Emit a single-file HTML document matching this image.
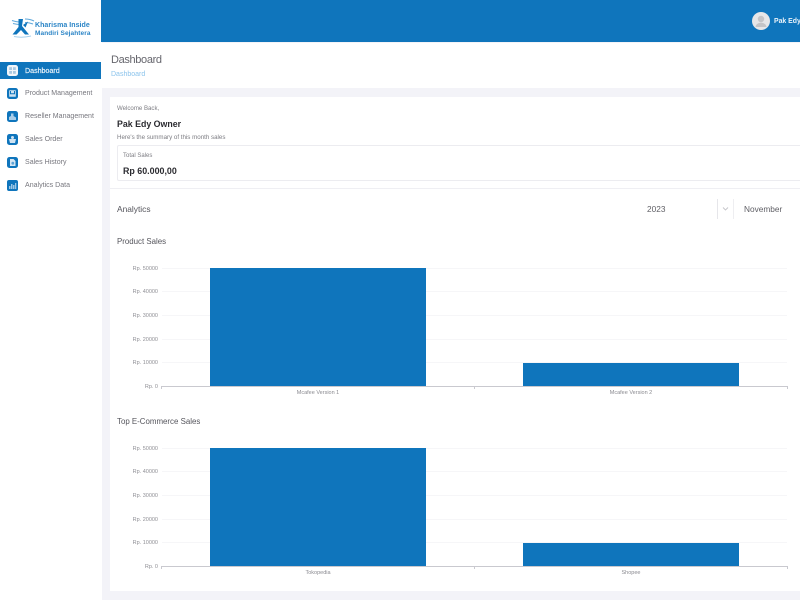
<!DOCTYPE html>
<html>
<head>
<meta charset="utf-8">
<style>
html,body{margin:0;padding:0;width:800px;height:600px;overflow:hidden;background:#fff;font-family:"Liberation Sans",sans-serif}
.a{position:absolute;white-space:nowrap}
.nav{position:absolute;left:25px;font-size:7.050px;color:#77777e;line-height:10px;letter-spacing:0}
.ic{position:absolute;left:7px;width:11px;height:11px}
.yl{position:absolute;left:113px;width:45px;text-align:right;font-size:5.500px;line-height:7px;color:#8f8f95}
.g{position:absolute;left:162px;width:625px;height:1px;background:#f6f6f8}
.xl{position:absolute;font-size:5.500px;line-height:7px;color:#8a8a90;text-align:center;width:120px}
.bar{position:absolute;background:#0f75bc}
.ax{position:absolute;background:#c9c9cf}
</style>
</head>
<body>
<div style="position:relative;width:800px;height:600px;overflow:hidden;filter:blur(.3px)">

<!-- content bg -->
<div class="a" style="left:102px;top:42px;width:698px;height:558px;background:#f3f3f8"></div>
<div class="a" style="left:102px;top:43px;width:698px;height:45px;background:#fff"></div>

<!-- top bar -->
<div class="a" style="left:101px;top:0;width:699px;height:42px;background:#0f75bc"></div>
<div class="a" style="left:752px;top:12px;width:18px;height:18px;border-radius:50%;background:#e6e6e8;overflow:hidden">
  <svg width="18" height="18" viewBox="0 0 18 18"><circle cx="9" cy="7" r="3.2" fill="#c4c4c7"/><path d="M3.5 15c.5-3 3-4.2 5.500-4.200s5 1.200 5.500 4.200z" fill="#c4c4c7"/></svg>
</div>
<div class="a" style="left:774px;top:16.500px;font-size:6.900px;line-height:10px;color:#e8f2fa;font-weight:bold">Pak Edy</div>

<!-- sidebar -->
<div class="a" style="left:0;top:0;width:101px;height:600px;background:#fff"></div>
<svg class="a" style="left:11px;top:17px" width="24" height="21" viewBox="0 0 24 21">
  <path d="M1 3.500c3 1 5 1.500 8 1.500M2 6.500c2 .5 4 1 7 1M14 2c3 0 6 .5 9 2M14 5.500c3 0 5 .3 8 1.500" stroke="#5fa8da" stroke-width="1.100" fill="none"/>
  <path d="M7.500 2h4.500L11 9l7 8.500h-4L10 13l-4.500 4.500H1.500L7.500 10z" fill="#0f75bc"/>
  <path d="M12 8l5-3.500-2.500 6z" fill="#0f75bc"/>
  <path d="M3 19.500c5 1 11 1 17-.5" stroke="#a6d0ec" stroke-width="1" fill="none"/>
</svg>
<div class="a" style="left:35px;top:21px;font-size:7px;line-height:9px;font-weight:bold;color:#2a84c6;letter-spacing:.05px">Kharisma Inside</div>
<div class="a" style="left:35px;top:29px;font-size:6.500px;line-height:9px;font-weight:bold;color:#2a84c6;letter-spacing:.08px">Mandiri Sejahtera</div>

<div class="a" style="left:0;top:62px;width:101px;height:17px;background:#0f75bc"></div>
<svg class="ic" style="top:65px" viewBox="0 0 11 11"><rect width="11" height="11" rx="2.500" fill="#f2f6fa"/><g fill="#a9c9e2"><rect x="2.200" y="2.200" width="2.800" height="2.800"/><rect x="6" y="2.200" width="2.800" height="2.800"/><rect x="2.200" y="6" width="2.800" height="2.800"/><rect x="6" y="6" width="2.800" height="2.800"/></g></svg>
<div class="nav" style="top:66px;color:#eef5fb;font-size:7.100px;-webkit-text-stroke:.15px #eef5fb">Dashboard</div>

<svg class="ic" style="top:88px" viewBox="0 0 11 11"><rect width="11" height="11" rx="2.500" fill="#0f75bc"/><rect x="2.200" y="2.200" width="6.600" height="6.600" rx=".6" fill="#cfe3f2"/><path d="M3.500 3v2.800h4V3" stroke="#0f75bc" stroke-width="1" fill="none"/></svg>
<div class="nav" style="top:88.500px">Product Management</div>

<svg class="ic" style="top:111px" viewBox="0 0 11 11"><rect width="11" height="11" rx="2.500" fill="#0f75bc"/><path d="M2 9V6l2-1V2.500h2.500V5L9 6.500V9z" fill="#a9cde8"/></svg>
<div class="nav" style="top:111.500px">Reseller Management</div>

<svg class="ic" style="top:134px" viewBox="0 0 11 11"><rect width="11" height="11" rx="2.500" fill="#0f75bc"/><path d="M2 5h7L8 9H3z" fill="#cfe3f2"/><circle cx="5.500" cy="3.500" r="1.500" fill="#cfe3f2"/></svg>
<div class="nav" style="top:134.500px">Sales Order</div>

<svg class="ic" style="top:157px" viewBox="0 0 11 11"><rect width="11" height="11" rx="2.500" fill="#0f75bc"/><path d="M3 2h3.500L8.500 4v5H3z" fill="#d5e6f3"/><circle cx="5.800" cy="6.200" r="1.400" fill="#5ea3d4"/></svg>
<div class="nav" style="top:157.500px">Sales History</div>

<svg class="ic" style="top:180px" viewBox="0 0 11 11"><rect width="11" height="11" rx="2" fill="#0f75bc"/><g fill="#9cc6e5"><rect x="2" y="6" width="1.500" height="3"/><rect x="4" y="4" width="1.500" height="5"/><rect x="6" y="5" width="1.500" height="4"/><rect x="8" y="3" width="1.300" height="6"/></g></svg>
<div class="nav" style="top:180.500px">Analytics Data</div>

<!-- page header -->
<div class="a" style="left:111px;top:52.500px;font-size:11px;line-height:14px;color:#66666d;letter-spacing:-.35px">Dashboard</div>
<div class="a" style="left:111px;top:70px;font-size:7px;line-height:10px;color:#8cc4ec">Dashboard</div>

<!-- card -->
<div class="a" style="left:110px;top:97px;width:690px;height:494px;background:#fff"></div>
<div class="a" style="left:117px;top:105px;font-size:6.100px;line-height:8px;color:#7d7d83">Welcome Back,</div>
<div class="a" style="left:117px;top:118px;font-size:8.800px;line-height:12px;font-weight:bold;color:#2b2b30">Pak Edy Owner</div>
<div class="a" style="left:117px;top:133.500px;font-size:6.200px;line-height:8px;color:#7d7d83">Here's the summary of this month sales</div>

<div class="a" style="left:117px;top:145px;width:690px;height:36px;border:1px solid #ececf0;border-radius:2px;box-sizing:border-box"></div>
<div class="a" style="left:123px;top:151.500px;font-size:6px;line-height:8px;color:#7d7d83">Total Sales</div>
<div class="a" style="left:123px;top:165px;font-size:8.900px;line-height:12px;font-weight:bold;color:#2b2b30">Rp 60.000,00</div>

<div class="a" style="left:110px;top:188px;width:690px;height:1px;background:#efeff3"></div>

<div class="a" style="left:117px;top:204px;font-size:8.400px;line-height:11px;color:#55555c">Analytics</div>
<div class="a" style="left:647px;top:204px;font-size:8.300px;line-height:11px;color:#5f5f65">2023</div>
<div class="a" style="left:717px;top:199px;width:1px;height:20px;background:#e6e6ea"></div>
<div class="a" style="left:733px;top:199px;width:1px;height:20px;background:#eeeef1"></div>
<svg class="a" style="left:722px;top:206px" width="7" height="6" viewBox="0 0 7 6"><path d="M1 1.500l2.500 2.500L6 1.500" stroke="#c4c4c9" stroke-width=".9" fill="none"/></svg>
<div class="a" style="left:744px;top:204px;font-size:8.300px;line-height:11px;color:#5f5f65">November</div>

<!-- chart 1 -->
<div class="a" style="left:117px;top:236px;font-size:7.900px;line-height:11px;color:#55555c">Product Sales</div>
<div class="g" style="top:268px"></div><div class="g" style="top:291px"></div><div class="g" style="top:315px"></div><div class="g" style="top:339px"></div><div class="g" style="top:362px"></div>
<div class="yl" style="top:265.500px">Rp. 50000</div><div class="yl" style="top:289px">Rp. 40000</div><div class="yl" style="top:312.500px">Rp. 30000</div><div class="yl" style="top:336.500px">Rp. 20000</div><div class="yl" style="top:360px">Rp. 10000</div><div class="yl" style="top:383.500px">Rp. 0</div>
<div class="bar" style="left:210px;top:268px;width:216px;height:118px"></div>
<div class="bar" style="left:523px;top:363px;width:216px;height:23px"></div>
<div class="ax" style="left:161px;top:386px;width:627px;height:1px"></div>
<div class="ax" style="left:161px;top:386px;width:1px;height:3px"></div>
<div class="ax" style="left:474px;top:386px;width:1px;height:3px"></div>
<div class="ax" style="left:787px;top:386px;width:1px;height:3px"></div>
<div class="xl" style="left:258px;top:389.500px">Mcafee Version 1</div>
<div class="xl" style="left:571px;top:389.500px">Mcafee Version 2</div>

<!-- chart 2 -->
<div class="a" style="left:117px;top:416px;font-size:7.900px;line-height:11px;color:#55555c">Top E-Commerce Sales</div>
<div class="g" style="top:448px"></div><div class="g" style="top:471px"></div><div class="g" style="top:495px"></div><div class="g" style="top:519px"></div><div class="g" style="top:542px"></div>
<div class="yl" style="top:445.500px">Rp. 50000</div><div class="yl" style="top:469px">Rp. 40000</div><div class="yl" style="top:492.500px">Rp. 30000</div><div class="yl" style="top:516.500px">Rp. 20000</div><div class="yl" style="top:540px">Rp. 10000</div><div class="yl" style="top:563.500px">Rp. 0</div>
<div class="bar" style="left:210px;top:448px;width:216px;height:118px"></div>
<div class="bar" style="left:523px;top:543px;width:216px;height:23px"></div>
<div class="ax" style="left:161px;top:566px;width:627px;height:1px"></div>
<div class="ax" style="left:161px;top:566px;width:1px;height:3px"></div>
<div class="ax" style="left:474px;top:566px;width:1px;height:3px"></div>
<div class="ax" style="left:787px;top:566px;width:1px;height:3px"></div>
<div class="xl" style="left:258px;top:569.500px">Tokopedia</div>
<div class="xl" style="left:571px;top:569.500px">Shopee</div>

</div>
</body>
</html>
